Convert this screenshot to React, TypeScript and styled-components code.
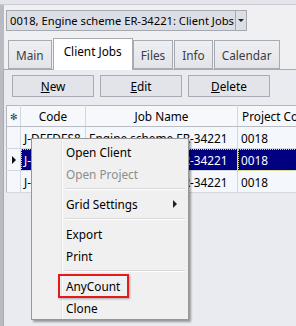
import styled, { createGlobalStyle } from "styled-components";

const GlobalStyle = createGlobalStyle`
  html, body {
    margin: 0;
    padding: 0;
    background: #eceef2;
  }
  body {
    font-family: "Noto Sans", "Open Sans", sans-serif;
    font-size: 11.2px;
    color: #000;
  }
`;

const Window = styled.div`
  position: relative;
  width: 296px;
  height: 326px;
  overflow: hidden;
  box-sizing: border-box;
  background: #f0f0f2;
  border-top: 4px solid #e4e4ea;
`;

const TopLine = styled.div`
  height: 1px;
  background: #c9cad0;
`;

const Body = styled.div`
  display: flex;
  flex-direction: column;
  height: 321px;
  border-left: 4px solid #b9bac2;
  box-sizing: border-box;
`;

const ComboRow = styled.div`
  padding: 5px 0 0 2px;
  height: 30px;
  box-sizing: border-box;
`;

const Combo = styled.div`
  display: flex;
  width: 241px;
  height: 21px;
  box-sizing: border-box;
  border: 1px solid #a6a8b0;
  background: #dcdee5;
`;

const ComboText = styled.div`
  flex: 1;
  padding-left: 3px;
  line-height: 19px;
  white-space: nowrap;
  overflow: hidden;
`;

const ComboArrow = styled.div`
  width: 10px;
  border-left: 1px solid #a6a8b0;
  display: flex;
  align-items: center;
  justify-content: center;
  &::after {
    content: "";
    border-left: 3px solid transparent;
    border-right: 3px solid transparent;
    border-top: 3px solid #222;
  }
`;

const TabStrip = styled.div`
  display: flex;
  align-items: flex-end;
  height: 35px;
  padding-left: 5px;
  box-sizing: border-box;
  border-bottom: 1px solid #a9abb3;
  margin-left: -1px;
`;

const Tab = styled.div<{ $active?: boolean }>`
  box-sizing: border-box;
  height: ${(p) => (p.$active ? "32px" : "29px")};
  padding: ${(p) => (p.$active ? "4px 10px 0" : "6px 7px 0")};
  margin-right: ${(p) => (p.$active ? "0" : "1px")};
  margin-bottom: ${(p) => (p.$active ? "-1px" : "0")};
  border: 1px solid #a9abb3;
  border-bottom: ${(p) => (p.$active ? "none" : "1px solid #a9abb3")};
  background: ${(p) => (p.$active ? "#ffffff" : "linear-gradient(#eeeff2, #e2e4e9)")};
  color: ${(p) => (p.$active ? "#000" : "#3c3c44")};
  font-size: 11.8px;
  white-space: nowrap;
`;

const Panel = styled.div`
  flex: 1;
  background: #e9ebf0;
  border-left: 1px solid #a9abb3;
  margin-left: -1px;
  padding: 5px 0 0 2px;
`;

const ButtonRow = styled.div`
  display: flex;
  gap: 6px;
  padding-left: 6px;
`;

const ToolButton = styled.div`
  width: 82px;
  height: 22px;
  box-sizing: border-box;
  border: 1px solid #a9abb3;
  background: #e2e4e9;
  text-align: center;
  line-height: 20px;
  font-size: 11.8px;
  u {
    text-decoration: underline;
  }
`;

const Grid = styled.table`
  margin-top: 8px;
  border-collapse: collapse;
  table-layout: fixed;
  width: 320px;
  background: #f4f7fb;
  border-top: 1px solid #b4b7bf;
  border-left: 1px solid #b4b7bf;
`;

const HeadCell = styled.th<{ $w: number; $align?: string }>`
  width: ${(p) => p.$w}px;
  height: 21px;
  padding: 0 4px;
  font-weight: normal;
  font-size: 11.8px;
  text-align: ${(p) => p.$align || "center"};
  background: #f6f8fb;
  border-right: 1px solid #d4d7de;
  border-bottom: 1px solid #b9bcc4;
  white-space: nowrap;
  overflow: hidden;
  box-sizing: border-box;
`;

const StarCell = styled(HeadCell)`
  padding: 0;
  font-size: 9px;
  color: #333;
`;

const Cell = styled.td<{ $sel?: boolean }>`
  height: 22px;
  padding: 0 2px 0 3px;
  font-size: 11.8px;
  white-space: nowrap;
  overflow: hidden;
  box-sizing: border-box;
  border-right: 1px solid #d4d7de;
  border-bottom: 1px solid #d4d7de;
  background: ${(p) => (p.$sel ? "#000080" : "transparent")};
  color: ${(p) => (p.$sel ? "#fff" : "#000")};
  outline: ${(p) => (p.$sel ? "1px dotted #d8d890" : "none")};
  outline-offset: -1px;
`;

const RowHead = styled.td<{ $current?: boolean }>`
  padding: 0;
  border-right: 1px solid #d4d7de;
  border-bottom: 1px solid #d4d7de;
  background: #f4f7fb;
  text-align: center;
  &::after {
    content: "";
    display: ${(p) => (p.$current ? "inline-block" : "none")};
    border-top: 4px solid transparent;
    border-bottom: 4px solid transparent;
    border-left: 4px solid #111;
  }
`;

const Menu = styled.div`
  position: absolute;
  left: 31px;
  top: 134px;
  width: 158px;
  box-sizing: border-box;
  padding: 2px 2px 0 2px;
  background: #f0f0f0;
  border: 1px solid #979797;
  box-shadow: 2px 2px 2px rgba(0, 0, 0, 0.35);
  background-image: linear-gradient(90deg, transparent 29px, #e2e3e3 29px, #e2e3e3 30px, #ffffff 30px, #ffffff 31px, transparent 31px);
`;

const MenuItem = styled.div<{ $disabled?: boolean }>`
  position: relative;
  display: flex;
  align-items: center;
  height: 22px;
  padding-left: 32px;
  font-size: 11.8px;
  color: ${(p) => (p.$disabled ? "#8d8d8d" : "#000")};
`;

const Highlight = styled.span`
  position: absolute;
  left: 24px;
  top: -1px;
  width: 71px;
  height: 24px;
  box-sizing: border-box;
  border: 2px solid #e41b1b;
  box-shadow: 1px 1px 2px rgba(0, 0, 0, 0.3);
`;

const SubArrow = styled.span`
  position: absolute;
  right: 9px;
  top: 7px;
  border-top: 4px solid transparent;
  border-bottom: 4px solid transparent;
  border-left: 4px solid #222;
`;

const Separator = styled.div`
  height: 1px;
  margin: 3px 1px 3px 31px;
  background: #d7d7d7;
  border-bottom: 1px solid #ffffff;
`;

const rows = [
  { code: "J-DEFDES8", name: "Engine scheme ER-34221", project: "0018" },
  { code: "J-DEFDES9", name: "Engine scheme ER-34221", project: "0018", selected: true },
  { code: "J-DEFDES0", name: "Engine scheme ER-34221", project: "0018" },
];

const App = () => {
  return (
    <>
      <GlobalStyle />
      <Window>
        <TopLine />
        <Body>
          <ComboRow>
            <Combo>
              <ComboText>0018, Engine scheme ER-34221: Client Jobs</ComboText>
              <ComboArrow />
            </Combo>
          </ComboRow>
          <TabStrip>
            <Tab>Main</Tab>
            <Tab $active>Client Jobs</Tab>
            <Tab>Files</Tab>
            <Tab>Info</Tab>
            <Tab>Calendar</Tab>
          </TabStrip>
          <Panel>
            <ButtonRow>
              <ToolButton>
                <u>N</u>ew
              </ToolButton>
              <ToolButton>
                <u>E</u>dit
              </ToolButton>
              <ToolButton>
                <u>D</u>elete
              </ToolButton>
            </ButtonRow>
            <Grid>
              <thead>
                <tr>
                  <StarCell $w={14}>✻</StarCell>
                  <HeadCell $w={65}>Code</HeadCell>
                  <HeadCell $w={152}>Job Name</HeadCell>
                  <HeadCell $w={89} $align="left">Project Code</HeadCell>
                </tr>
              </thead>
              <tbody>
                {rows.map((r) => (
                  <tr key={r.code}>
                    <RowHead $current={r.selected} />
                    <Cell $sel={r.selected}>{r.code}</Cell>
                    <Cell $sel={r.selected}>{r.name}</Cell>
                    <Cell $sel={r.selected}>{r.project}</Cell>
                  </tr>
                ))}
              </tbody>
            </Grid>
          </Panel>
        </Body>
        <Menu>
          <MenuItem>Open Client</MenuItem>
          <MenuItem $disabled>Open Project</MenuItem>
          <Separator />
          <MenuItem>
            Grid Settings
            <SubArrow />
          </MenuItem>
          <Separator />
          <MenuItem>Export</MenuItem>
          <MenuItem>Print</MenuItem>
          <Separator />
          <MenuItem>
            <Highlight />
            AnyCount
          </MenuItem>
          <MenuItem>Clone</MenuItem>
        </Menu>
      </Window>
    </>
  );
};

export default App;
